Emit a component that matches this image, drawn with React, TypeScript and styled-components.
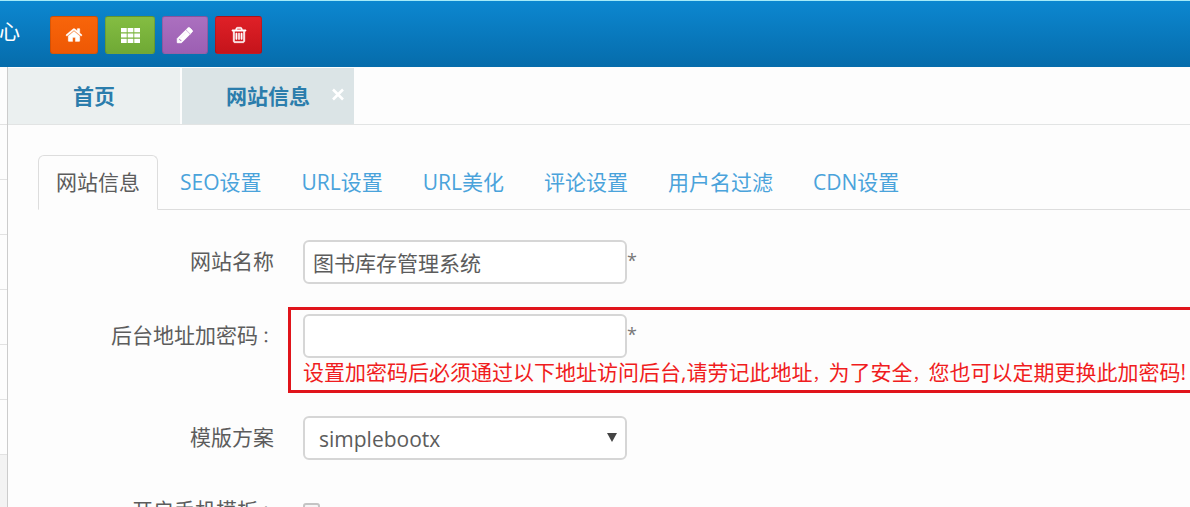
import React from "react";
import styled, { createGlobalStyle } from "styled-components";

const GlobalStyle = createGlobalStyle`
  *, *::before, *::after { box-sizing: border-box; }
  html, body { margin: 0; padding: 0; }
  body {
    background: #fdfdfd;
    color: #5c5c5c;
    font-family: "Open Sans", "Noto Sans CJK SC", sans-serif;
    font-size: 21px;
    line-height: 28px;
    overflow: hidden;
  }
  button, input, select { font: inherit; color: inherit; }
  a { text-decoration: none; }
`;

const Page = styled.div`
  height: 100vh;
  display: flex;
  flex-direction: column;
  overflow: hidden;
`;

const Header = styled.header`
  height: 67px;
  flex: none;
  padding-top: 2px;
  display: flex;
  align-items: center;
  border-top: 1px solid #a5eaf8;
  background: linear-gradient(#0c87d0, #066cab);
`;

const Brand = styled.div`
  width: 20px;
  height: 38px;
  margin-right: 30px;
  display: flex;
  justify-content: flex-end;
  overflow: hidden;
  color: #fff;
  line-height: 30px;
  white-space: nowrap;
`;

const Shortcuts = styled.div`
  display: flex;
  gap: 7px;
`;

const Shortcut = styled.button<{ $from: string; $to: string; $width: number }>`
  width: ${(p) => p.$width}px;
  height: 38px;
  padding: 0;
  display: flex;
  align-items: center;
  justify-content: center;
  border: 1px solid rgba(0, 0, 0, 0.12);
  border-radius: 3px;
  background: linear-gradient(${(p) => p.$from}, ${(p) => p.$to});
  color: #fff;
`;

const Body = styled.div`
  flex: 1;
  min-height: 0;
  display: flex;
`;

const Sidebar = styled.nav`
  width: 8px;
  flex: none;
  border-right: 1px solid #ccc;
  background: #f3f3f3;
`;

const SidebarRow = styled.div`
  height: 55px;
  border-bottom: 1px solid #e2e2e2;
  background: #fdfdfd;
  &:first-child { height: 58px; }
`;

const Main = styled.main`
  flex: 1;
  min-width: 0;
`;

const WindowTabs = styled.div`
  height: 58px;
  padding-top: 1px;
  display: flex;
  gap: 2px;
  border-bottom: 1px solid #e2e4e4;
`;

const WindowTab = styled.div<{ $active?: boolean }>`
  width: 172px;
  display: flex;
  align-items: center;
  justify-content: ${(p) => (p.$active ? "flex-end" : "center")};
  gap: 20px;
  padding-right: ${(p) => (p.$active ? "8px" : "0")};
  background: ${(p) => (p.$active ? "#dbe4e6" : "#ebf0f0")};
`;

const WindowLink = styled.a`
  color: #2b7dac;
  font-weight: 700;
`;

const CloseButton = styled.button`
  width: 16px;
  height: 20px;
  padding: 0;
  display: flex;
  border: 0;
  background: none;
  color: #fff;
`;

const NavTabs = styled.nav`
  margin: 30px 0 0 30px;
  display: flex;
  gap: 4px;
  border-bottom: 1px solid #ddd;
`;

const NavTab = styled.a<{ $active?: boolean }>`
  height: 55px;
  margin-bottom: -1px;
  padding: 0 17px;
  border: 1px solid ${(p) => (p.$active ? "#ddd" : "transparent")};
  border-bottom-color: ${(p) => (p.$active ? "#fdfdfd" : "transparent")};
  border-radius: 6px 6px 0 0;
  color: ${(p) => (p.$active ? "#5c5c5c" : "#4aa3db")};
  line-height: 52px;
  white-space: nowrap;
`;

const Form = styled.form`
  padding-top: 23px;
  display: flex;
  flex-direction: column;
  gap: 16px;
`;

const Row = styled.div<{ $line?: number }>`
  display: grid;
  grid-template-columns: 266px 1fr;
  column-gap: 14px;
  align-items: start;
  line-height: ${(p) => p.$line ?? 42}px;
`;

const Label = styled.label`
  padding-top: 7px;
  text-align: right;
`;

const Control = styled.div<{ $marked?: boolean }>`
  padding: 4px 0 4px 12px;
  border: 3px solid ${(p) => (p.$marked ? "#e0141b" : "transparent")};
  border-right: 0;
`;

const Line = styled.div`
  display: flex;
`;

const TextInput = styled.input`
  width: 324px;
  height: 44px;
  padding: 0 8px;
  border: 2px solid #d6d6d6;
  border-radius: 6px;
  background: #fff;
  outline: 0;
`;

const SelectBox = styled.div`
  width: 324px;
  height: 44px;
  display: grid;
  align-items: center;
  > * { grid-area: 1 / 1; }
  svg { justify-self: end; margin-right: 10px; pointer-events: none; }
`;

const Select = styled.select`
  width: 100%;
  height: 44px;
  padding: 0 14px 2px;
  appearance: none;
  border: 2px solid #d6d6d6;
  border-radius: 6px;
  background: #fff;
`;

const Required = styled.span`
  color: #777;
  font-size: 18px;
  line-height: 40px;
`;

const Help = styled.p`
  margin: 0;
  color: #f01c20;
  line-height: 28px;
  white-space: nowrap;
`;

/* Full-width punctuation, set a size below the text around it. */
const Mark = styled.span`
  font-family: "Noto Sans CJK SC", sans-serif;
  font-size: 16px;
  line-height: 1;
`;

const Colon = styled(Mark)`
  font-family: "Noto Sans CJK TC", sans-serif;
`;

const Checkbox = styled.input`
  width: 17px;
  height: 17px;
  margin: 13px 0;
  appearance: none;
  border: 2px solid #c4c4c4;
  border-radius: 3px;
  background: #f6f6f6;
`;

const glyphs = {
  home: "M1472 992v480q0 26-19 45t-45 19h-384v-384h-256v384h-384q-26 0-45-19t-19-45v-480q0-1 .5-3t.5-3l575-474 575 474q1 2 1 6zm223-69l-62 74q-8 9-21 11h-3q-13 0-21-7l-692-577-692 577q-12 8-24 7-13-2-21-11l-62-74q-8-10-7-23.5t11-21.5l719-599q32-26 76-26t76 26l244 204v-195q0-14 9-23t23-9h192q14 0 23 9t9 23v408l219 182q10 8 11 21.5t-7 23.5z",
  grid: "M0 192h540v400H0zM626 192h540v400H626zM1252 192h540v400h-540zM0 696h540v400H0zM626 696h540v400H626zM1252 696h540v400h-540zM0 1200h540v400H0zM626 1200h540v400H626zM1252 1200h540v400h-540z",
  pencil: "M491 1536l91-91-235-235-91 91v107h128v128h107zm523-928q0-22-22-22-10 0-17 7l-542 542q-7 7-7 17 0 22 22 22 10 0 17-7l542-542q7-7 7-17zm-54-192l416 416-832 832h-416v-416zm683 96q0 53-37 90l-166 166-416-416 166-165q36-38 90-38 53 0 91 38l235 234q37 39 37 91z",
  trash: "M704 736v576q0 14-9 23t-23 9h-64q-14 0-23-9t-9-23v-576q0-14 9-23t23-9h64q14 0 23 9t9 23zm256 0v576q0 14-9 23t-23 9h-64q-14 0-23-9t-9-23v-576q0-14 9-23t23-9h64q14 0 23 9t9 23zm256 0v576q0 14-9 23t-23 9h-64q-14 0-23-9t-9-23v-576q0-14 9-23t23-9h64q14 0 23 9t9 23zm128 724v-948h-896v948q0 22 7 40.5t14.5 27 10.5 8.5h832q3 0 10.5-8.5t14.5-27 7-40.5zm-672-1076h448l-48-117q-7-9-17-11h-317q-10 2-17 11zm928 32v64q0 14-9 23t-23 9h-96v948q0 83-47 143.5t-113 60.5h-832q-66 0-113-58.5t-47-141.5v-952h-96q-14 0-23-9t-9-23v-64q0-14 9-23t23-9h309l70-167q15-37 54-63t79-26h320q40 0 79 26t54 63l70 167h309q14 0 23 9t9 23z",
};

type ShortcutItem = {
  name: keyof typeof glyphs;
  label: string;
  from: string;
  to: string;
  width: number;
  size: number;
  outline: number;
};

const shortcuts: ShortcutItem[] = [
  { name: "home", label: "首页", from: "#f8650a", to: "#ee5804", width: 48, size: 18, outline: 30 },
  { name: "grid", label: "栏目", from: "#84bd42", to: "#6fa935", width: 50, size: 19, outline: 0 },
  { name: "pencil", label: "编辑", from: "#ab70bf", to: "#9c5fb3", width: 46, size: 18, outline: 90 },
  { name: "trash", label: "清除", from: "#df2027", to: "#c5141b", width: 47, size: 18, outline: 50 },
];

const sections = ["网站信息", "SEO设置", "URL设置", "URL美化", "评论设置", "用户名过滤", "CDN设置"];

export default function App() {
  return (
    <Page>
      <GlobalStyle />
      <Header>
        <Brand>心</Brand>
        <Shortcuts>
          {shortcuts.map((s) => (
            <Shortcut key={s.name} type="button" aria-label={s.label} $from={s.from} $to={s.to} $width={s.width}>
              <svg
                width={s.size}
                height={s.size}
                viewBox="0 0 1792 1792"
                fill="currentColor"
                stroke="currentColor"
                strokeWidth={s.outline}
              >
                <path d={glyphs[s.name]} />
              </svg>
            </Shortcut>
          ))}
        </Shortcuts>
      </Header>
      <Body>
        <Sidebar>
          {Array.from({ length: 7 }, (_, i) => (
            <SidebarRow key={i} />
          ))}
        </Sidebar>
        <Main>
          <WindowTabs>
            <WindowTab>
              <WindowLink href="#home">首页</WindowLink>
            </WindowTab>
            <WindowTab $active>
              <WindowLink href="#site">网站信息</WindowLink>
              <CloseButton type="button" aria-label="关闭">
                <svg width="16" height="16" viewBox="0 0 16 16" stroke="currentColor" strokeWidth="2.6">
                  <path d="M3 3.500l10 10M13 3.500l-10 10" />
                </svg>
              </CloseButton>
            </WindowTab>
          </WindowTabs>
          <NavTabs>
            {sections.map((name, i) => (
              <NavTab key={name} href={`#section-${i}`} $active={i === 0}>
                {name}
              </NavTab>
            ))}
          </NavTabs>
          <Form>
            <Row>
              <Label htmlFor="site-name">网站名称</Label>
              <Control>
                <Line>
                  <TextInput id="site-name" type="text" defaultValue="图书库存管理系统" />
                  <Required>*</Required>
                </Line>
              </Control>
            </Row>
            <Row>
              <Label htmlFor="site-code">
                后台地址加密码<Colon>：</Colon>
              </Label>
              <Control $marked>
                <Line>
                  <TextInput id="site-code" type="text" />
                  <Required>*</Required>
                </Line>
                <Help>
                  设置加密码后必须通过以下地址访问后台,请劳记此地址<Mark>，</Mark>为了安全<Mark>，</Mark>
                  您也可以定期更换此加密码!
                </Help>
              </Control>
            </Row>
            <Row>
              <Label htmlFor="site-theme">模版方案</Label>
              <Control>
                <SelectBox>
                  <Select id="site-theme" defaultValue="simplebootx">
                    <option>simplebootx</option>
                  </Select>
                  <svg width="10" height="10" viewBox="0 0 10 10" fill="#444">
                    <path d="M0 0h10L5 9z" />
                  </svg>
                </SelectBox>
              </Control>
            </Row>
            <Row $line={40}>
              <Label htmlFor="site-mobile">
                开启手机模板<Colon>：</Colon>
              </Label>
              <Control>
                <Line>
                  <Checkbox id="site-mobile" type="checkbox" />
                </Line>
              </Control>
            </Row>
          </Form>
        </Main>
      </Body>
    </Page>
  );
}
